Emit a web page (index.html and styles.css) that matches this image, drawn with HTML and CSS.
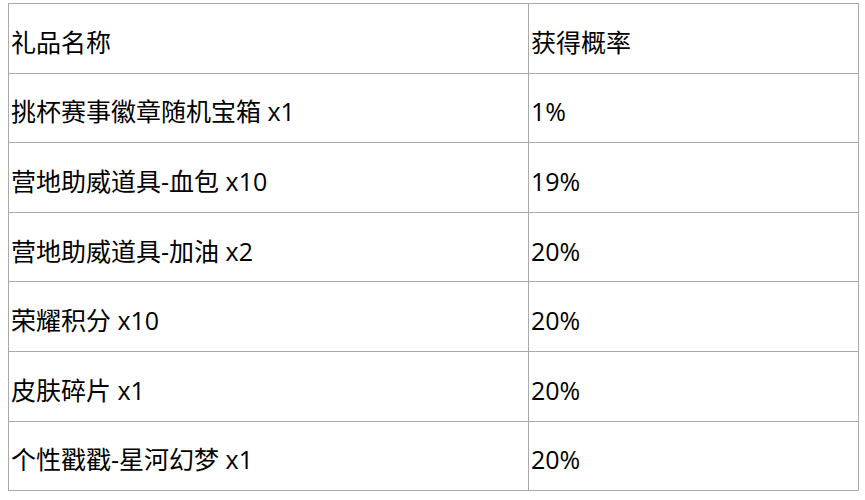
FILE: index.html
```html
<!DOCTYPE html>
<html lang="zh">
<head>
<meta charset="utf-8">
<link rel="stylesheet" href="styles.css">
</head>
<body>
<table class="prize-table">
  <tr><td class="name">礼品名称</td><td class="rate">获得概率</td></tr>
  <tr><td class="name">挑杯赛事徽章随机宝箱 x1</td><td class="rate">1%</td></tr>
  <tr><td class="name">营地助威道具-血包 x10</td><td class="rate">19%</td></tr>
  <tr><td class="name">营地助威道具-加油 x2</td><td class="rate">20%</td></tr>
  <tr><td class="name">荣耀积分 x10</td><td class="rate">20%</td></tr>
  <tr><td class="name">皮肤碎片 x1</td><td class="rate">20%</td></tr>
  <tr><td class="name">个性戳戳-星河幻梦 x1</td><td class="rate">20%</td></tr>
</table>
</body>
</html>
```
FILE: styles.css
```css
body {
  margin: 3px 0 0 8px;
  background: #fff;
}
.prize-table {
  border-collapse: collapse;
  width: 851px;
  font-family: "Open Sans", "Noto Sans CJK SC", sans-serif;
  font-size: 25px;
  color: #000;
}
.prize-table td {
  border: 1px solid #aaa;
  height: 60.6px;
  padding: 8px 2px 0 2px;
  vertical-align: middle;
  line-height: 1;
}
.prize-table .name {
  width: 515px;
}
```
